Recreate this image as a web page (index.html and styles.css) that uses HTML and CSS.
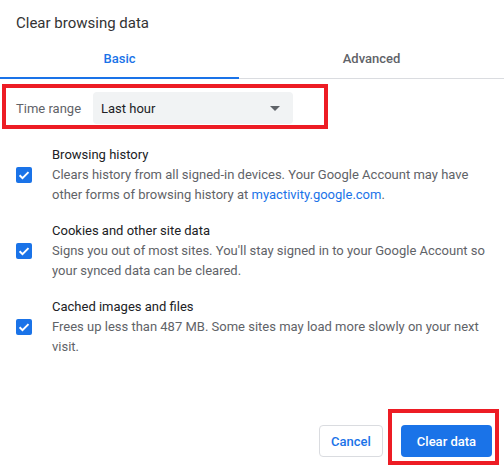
FILE: index.html
```html
<!DOCTYPE html>
<html lang="en">

<head>
    <meta charset="UTF-8">
    <title>Clear browsing data</title>
    <link rel="stylesheet" href="styles.css">
</head>

<body>
    <div class="dialog">
        <!-- Title -->
        <div class="title">Clear browsing data</div>

        <!-- Tabs -->
        <div class="tabs">
            <div class="tab active">Basic</div>
            <div class="tab">Advanced</div>
        </div>

        <!-- Time range -->
        <div class="time-range">
            <span class="label">Time range</span>
            <div class="select">
                <span>Last hour</span>
                <span class="arrow"></span>
            </div>
            <div class="highlight"></div>
        </div>

        <!-- Options -->
        <div class="options">
            <div class="option">
                <div class="checkbox">
                    <svg width="16" height="16" viewBox="0 0 16 16"><path d="M3.6 8.2l2.9 2.9 6-6" fill="none" stroke="#fff" stroke-width="2"/></svg>
                </div>
                <div class="option-text">
                    <div class="option-title">Browsing history</div>
                    <div class="option-desc">Clears history from all signed-in devices. Your Google Account may have other forms of browsing history at <a href="#">myactivity.google.com</a>.</div>
                </div>
            </div>
            <div class="option">
                <div class="checkbox">
                    <svg width="16" height="16" viewBox="0 0 16 16"><path d="M3.6 8.2l2.9 2.9 6-6" fill="none" stroke="#fff" stroke-width="2"/></svg>
                </div>
                <div class="option-text">
                    <div class="option-title">Cookies and other site data</div>
                    <div class="option-desc">Signs you out of most sites. You'll stay signed in to your Google Account so your synced data can be cleared.</div>
                </div>
            </div>
            <div class="option">
                <div class="checkbox">
                    <svg width="16" height="16" viewBox="0 0 16 16"><path d="M3.6 8.2l2.9 2.9 6-6" fill="none" stroke="#fff" stroke-width="2"/></svg>
                </div>
                <div class="option-text">
                    <div class="option-title">Cached images and files</div>
                    <div class="option-desc">Frees up less than 487 MB. Some sites may load more slowly on your next visit.</div>
                </div>
            </div>
        </div>

        <!-- Buttons -->
        <div class="actions">
            <button class="btn cancel">Cancel</button>
            <button class="btn primary">Clear data<span class="highlight"></span></button>
        </div>
    </div>
</body>

</html>
```

FILE: styles.css
```css
body {
    margin: 0;
    background-color: white;
    font-family: 'Roboto', 'Liberation Sans', sans-serif;
}

.dialog {
    width: 504px;
    height: 470px;
    box-sizing: border-box;
}

/* Title */
.title {
    height: 40px;
    padding-left: 16px;
    line-height: 47px;
    font-size: 15px;
    color: #333;
}

/* Tabs */
.tabs {
    display: flex;
    height: 38px;
    border-bottom: 1px solid #dadce0;
}

.tab {
    flex: 1;
    text-align: center;
    line-height: 38px;
    font-size: 13px;
    font-weight: 500;
    color: #5f6368;
}

.tab.active {
    flex: 0 0 239px;
    color: #1a73e8;
    border-bottom: 2px solid #1a73e8;
    margin-bottom: -1px;
}

/* Time range */
.time-range {
    position: relative;
    display: flex;
    align-items: center;
    margin-top: 13px;
    height: 32px;
}

.time-range .label {
    width: 77px;
    padding-left: 16px;
    font-size: 13px;
    color: #5f6368;
}

.select {
    display: flex;
    align-items: center;
    justify-content: space-between;
    width: 200px;
    height: 32px;
    box-sizing: border-box;
    padding: 0 8px 0 8px;
    background-color: #f1f3f4;
    border-radius: 4px;
    font-size: 13px;
    color: #202124;
}

.arrow {
    width: 0;
    height: 0;
    margin-right: 5px;
    border-left: 5px solid transparent;
    border-right: 5px solid transparent;
    border-top: 5px solid #5f6368;
}

/* red annotation boxes */
.highlight {
    position: absolute;
    border: 4px solid #ed1c24;
    box-sizing: border-box;
}

.time-range .highlight {
    top: -8px;
    left: 2px;
    width: 326px;
    height: 45px;
}

/* Options */
.options {
    margin-top: 21px;
}

.option {
    display: flex;
    align-items: center;
    margin-bottom: 16px;
}

.checkbox {
    width: 16px;
    height: 16px;
    margin: 0 20px 0 16px;
    flex-shrink: 0;
    background-color: #1a73e8;
    border-radius: 2px;
}

.checkbox svg {
    display: block;
}

.option-text {
    font-size: 13px;
    line-height: 20px;
    padding-right: 12px;
}

.option-title {
    color: #202124;
}

.option-desc {
    color: #5f6368;
}

.option-desc a {
    color: #1a73e8;
    text-decoration: none;
}

/* Buttons */
.actions {
    display: flex;
    justify-content: flex-end;
    gap: 18px;
    margin-top: 68px;
    padding-right: 12px;
}

.btn {
    position: relative;
    height: 32px;
    border-radius: 4px;
    font-family: inherit;
    font-size: 13px;
    font-weight: 500;
    cursor: pointer;
}

.btn.cancel {
    width: 64px;
    background-color: white;
    border: 1px solid #dadce0;
    color: #1a73e8;
}

.btn.primary {
    width: 91px;
    background-color: #1a73e8;
    border: none;
    color: white;
}

.btn.primary .highlight {
    top: -16px;
    left: -13px;
    width: 111px;
    height: 56px;
}
```
